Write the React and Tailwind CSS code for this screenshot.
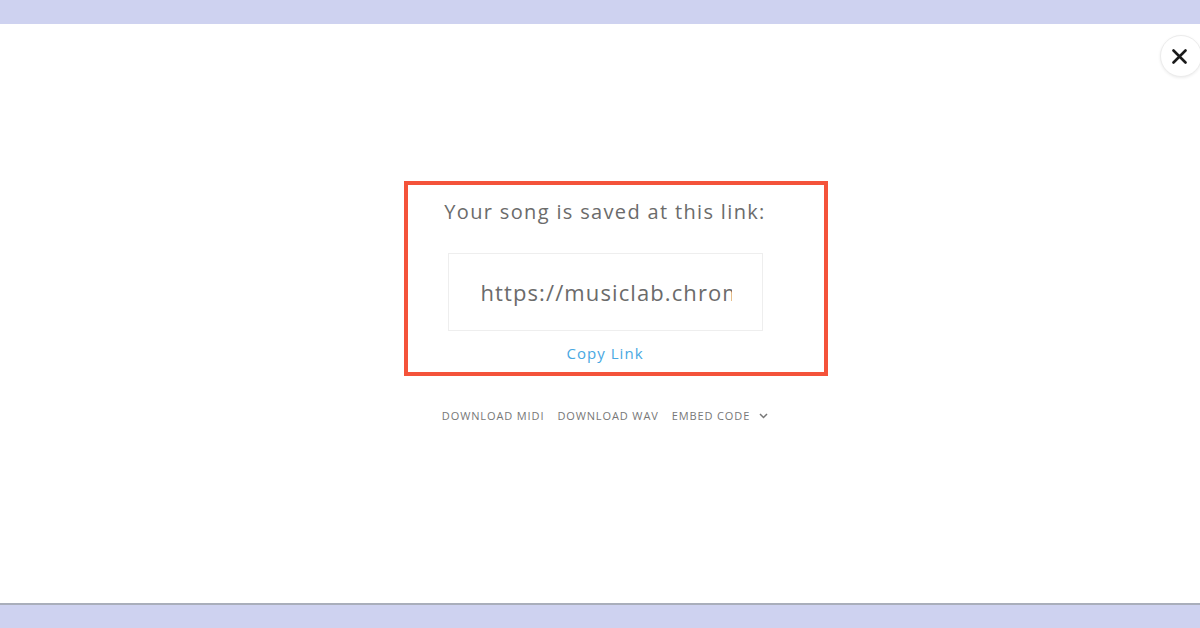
import React from 'react';

const font = { fontFamily: '"Open Sans", "Liberation Sans", sans-serif' };

const SavedLink = () => {
  const url = 'https://musiclab.chromeexperiments.com/Song-Maker/song/6234567890123456';

  return (
    <div className="w-[1200px] h-[628px] flex flex-col bg-[#ced2f0] overflow-hidden" style={font}>
      <div className="h-[24px] shrink-0" />

      <div className="relative flex-1 bg-white flex flex-col items-center pt-[157px] pl-[10px]">
        {/* Close */}
        <button className="absolute right-[-2px] top-[11px] w-[42px] h-[42px] rounded-full bg-white border border-[#ececec] shadow-[0_1px_3px_rgba(0,0,0,0.08)] flex items-center justify-center pr-[3px]">
          <svg width="15" height="15" viewBox="0 0 15 15">
            <path d="M1.5 1.5L13.5 13.5M13.5 1.5L1.5 13.5" stroke="#1a1a1a" strokeWidth="2.6" strokeLinecap="round" />
          </svg>
        </button>

        {/* Link box */}
        <div className="ml-[22px] w-[424px] h-[195px] border-[4px] border-[#f4533a] flex flex-col items-center pt-[13px] pr-[22px]">
          <p className="text-[20px] leading-[28px] text-[#6b6b6b] tracking-[0.067em]">
            Your song is saved at this link:
          </p>
          <div className="mt-[27px] w-[315px] h-[78px] border border-[#eeeeee] flex items-center pl-[32px] pr-[30px]">
            <input
              readOnly
              value={url}
              className="w-full bg-transparent outline-none text-[22px] text-[#6b6b6b] tracking-[0.05em]"
              style={font}
            />
          </div>
          <button className="mt-[12px] text-[15px] leading-[20px] text-[#48a8e2] tracking-[0.07em]">
            Copy Link
          </button>
        </div>

        {/* Downloads */}
        <div className="mt-[32px] flex items-center gap-[13px] text-[11px] text-[#777777] tracking-[0.08em]">
          <button className="uppercase">Download MIDI</button>
          <button className="uppercase">Download WAV</button>
          <button className="uppercase flex items-center gap-[9px]">
            Embed Code
            <svg width="9" height="6" viewBox="0 0 9 6">
              <path d="M1 1L4.5 4.5L8 1" stroke="#777777" strokeWidth="1.5" fill="none" />
            </svg>
          </button>
        </div>
      </div>

      <div className="h-[2px] shrink-0 bg-[#a9aebb]" />
      <div className="h-[23px] shrink-0" />
    </div>
  );
};

export default function App() {
  return <SavedLink />;
}
